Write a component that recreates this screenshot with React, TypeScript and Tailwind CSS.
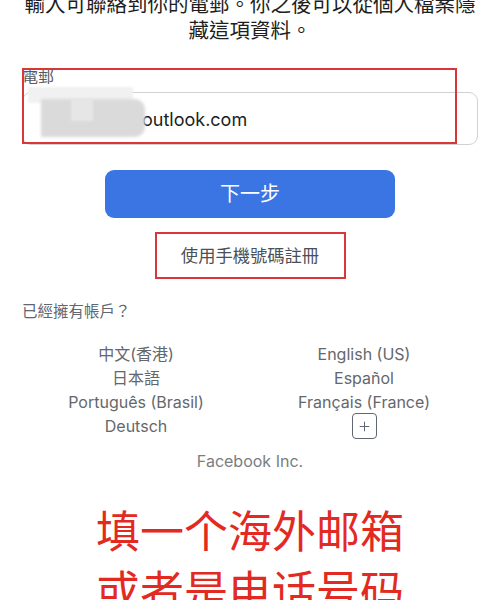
import { Plus } from 'lucide-react'

const langs: [string, string][] = [
  ['中文(香港)', 'English (US)'],
  ['日本語', 'Español'],
  ['Português (Brasil)', 'Français (France)'],
]

export default function App() {
  return (
    <div
      className="relative w-[500px] h-[600px] overflow-hidden bg-white"
      style={{ fontFamily: 'Inter, "Noto Sans CJK TC", "Noto Sans CJK SC", sans-serif' }}
    >
      {/* 頂部說明文字（第一行被裁掉） */}
      <p className="-mt-[8px] px-[20px] text-center text-[20.5px] leading-[26px] text-[#1c1e21]">
        輸入可聯絡到你的電郵。你之後可以從個人檔案隱
        <br />
        藏這項資料。
      </p>

      {/* 電郵欄位 */}
      <div className="relative mt-[21px] px-[22px]">
        <div className="text-[16px] leading-[20px] pt-[1px] text-[#555a60]">電郵</div>
        <div className="relative mt-[6px] h-[53px] rounded-[9px] border border-[#cfd1d4] flex items-center pl-[119px] pt-[2px] text-[18px] text-[#1c1e21]">
          outlook.com
          {/* 打碼 */}
          <div className="absolute left-[5px] top-[-6px] w-[105px] h-[16px] bg-[#f1f1f1] blur-[1px]" />
          <div className="absolute left-[18px] top-[6px] w-[104px] h-[38px] rounded-r-[10px] bg-[#dadada] blur-[1.5px]" />
          <div className="absolute left-[48px] top-[6px] w-[22px] h-[22px] bg-[#e6e6e6] blur-[1px]" />
        </div>
        {/* 紅框標註 */}
        <div className="absolute left-[22px] top-[3px] w-[435px] h-[76px] border-2 border-[#d9363a] pointer-events-none" />
      </div>

      {/* 下一步 */}
      <button className="block mx-auto mt-[25px] w-[290px] h-[48px] rounded-[9px] bg-[#3a75e3] text-white text-[20px]">
        下一步
      </button>

      {/* 使用手機號碼註冊 */}
      <div className="mx-auto mt-[14px] w-[191px] h-[47px] border-2 border-[#d9363a] flex items-center justify-center text-[17.3px] text-[#4b4f56]">
        使用手機號碼註冊
      </div>

      <div className="mt-[22px] px-[22px] text-[15.5px] leading-[22px] text-[#606770]">已經擁有帳戶？</div>

      {/* 語言 */}
      <div className="mt-[19px] px-[22px] grid grid-cols-2 auto-rows-[24px] items-center text-center text-[16px] text-[#65676b]">
        {langs.map(([a, b]) => (
          <>
            <div key={a}>{a}</div>
            <div key={b}>{b}</div>
          </>
        ))}
        <div>Deutsch</div>
        <div className="flex justify-center">
          <div className="w-[25px] h-[26px] rounded-[4px] border-[1.5px] border-[#606770] flex items-center justify-center">
            <Plus size={15} strokeWidth={1.6} color="#606770" />
          </div>
        </div>
      </div>

      <div className="mt-[12px] text-center text-[16px] leading-[22px] text-[#7a7d82]">Facebook Inc.</div>

      {/* 紅字說明 */}
      <div
        className="mt-[27px] text-center text-[44px] leading-[60px] text-[#e32a22]"
        style={{ fontFamily: '"Noto Sans CJK SC", sans-serif' }}
      >
        填一个海外邮箱
        <br />
        或者是电话号码
      </div>
    </div>
  )
}
